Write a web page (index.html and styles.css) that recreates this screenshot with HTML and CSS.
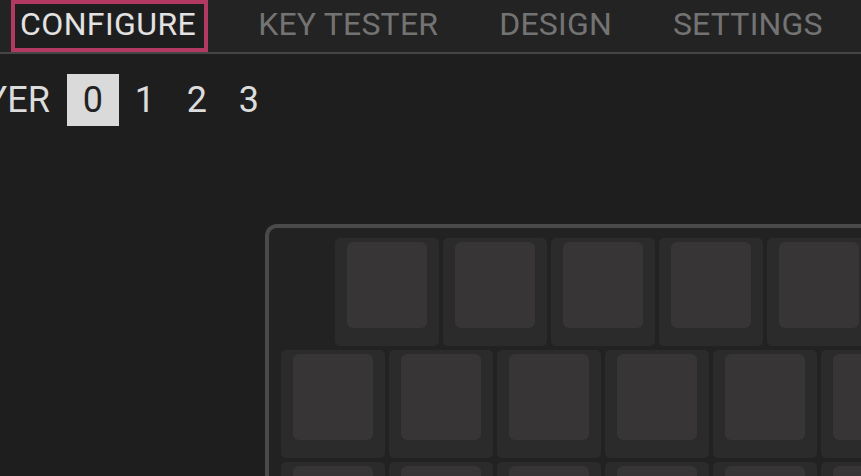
FILE: index.html
```html
<!DOCTYPE html>
<html>
<head>
<meta charset="utf-8">
<link rel="stylesheet" href="styles.css">
</head>
<body>
<header class="tabs">
  <div class="tab active">CONFIGURE</div>
  <div class="tab">KEY TESTER</div>
  <div class="tab">DESIGN</div>
  <div class="tab">SETTINGS</div>
</header>
<main class="main">
  <div class="layers">
    <span class="layer-label">LAYER</span>
    <span class="layer sel">0</span>
    <span class="layer">1</span>
    <span class="layer">2</span>
    <span class="layer">3</span>
  </div>
  <div class="board">
    <div class="row row1">
      <div class="spacer"></div>
      <div class="key"><div class="cap"></div></div>
      <div class="key"><div class="cap"></div></div>
      <div class="key"><div class="cap"></div></div>
      <div class="key"><div class="cap"></div></div>
      <div class="key"><div class="cap"></div></div>
    </div>
    <div class="row">
      <div class="key"><div class="cap"></div></div>
      <div class="key"><div class="cap"></div></div>
      <div class="key"><div class="cap"></div></div>
      <div class="key"><div class="cap"></div></div>
      <div class="key"><div class="cap"></div></div>
      <div class="key"><div class="cap"></div></div>
    </div>
    <div class="row">
      <div class="key"><div class="cap"></div></div>
      <div class="key"><div class="cap"></div></div>
      <div class="key"><div class="cap"></div></div>
      <div class="key"><div class="cap"></div></div>
      <div class="key"><div class="cap"></div></div>
      <div class="key"><div class="cap"></div></div>
    </div>
  </div>
</main>
</body>
</html>
```
FILE: styles.css
```css
html, body {
  margin: 0;
  padding: 0;
  width: 861px;
  height: 476px;
  overflow: hidden;
  background: #1e1e1e;
  font-family: Roboto, "Noto Sans", sans-serif;
}
.tabs {
  display: flex;
  height: 52px;
  background: #232323;
  border-bottom: 2px solid #454545;
  padding-left: 11px;
}
.tab {
  box-sizing: border-box;
  height: 52px;
  line-height: 40px;
  font-size: 32px;
  letter-spacing: 0.2px;
  color: #737373;
  border: 4px solid transparent;
  padding: 0 5px;
  margin-right: 43px;
  white-space: nowrap;
}
.tab.active {
  border-color: #b23a62;
  background: #1e1e1e;
  color: #e2e2e2;
  letter-spacing: 0.4px;
  padding: 0 8px 0 5px;
  margin-right: 41px;
}
.main {
  padding-top: 20px;
}
.layers {
  display: flex;
  align-items: center;
  height: 52px;
  font-size: 36px;
  color: #dcdcdc;
}
.layer-label {
  margin-left: -56px;
  margin-right: 17px;
}
.layer {
  width: 52px;
  height: 52px;
  line-height: 52px;
  text-align: center;
}
.layer.sel {
  background: #dadada;
  color: #222;
}
.board {
  margin-top: 98px;
  margin-left: 265px;
  width: 900px;
  height: 400px;
  background: #222;
  border: 4px solid #4a4a4a;
  border-right: none;
  border-bottom: none;
  border-top-left-radius: 12px;
  padding: 10px 0 0 12px;
  display: flex;
  flex-direction: column;
  gap: 4px;
}
.row {
  display: flex;
  gap: 4px;
}
.spacer {
  width: 50px;
  flex: none;
}
.key {
  flex: none;
  box-sizing: border-box;
  width: 104px;
  height: 108px;
  background: #2b2b2b;
  border-radius: 5px;
  padding: 4px 12px 18px;
}
.cap {
  width: 100%;
  height: 100%;
  background: #373536;
  border-radius: 6px;
}
```
